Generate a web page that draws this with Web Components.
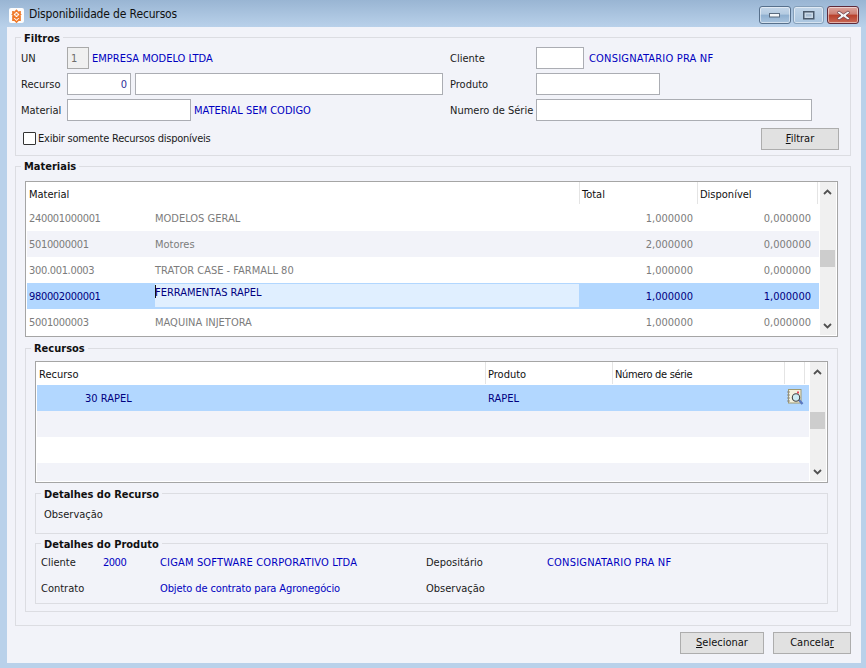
<!DOCTYPE html>
<html lang="pt">
<head>
<meta charset="utf-8">
<title>Disponibilidade de Recursos</title>
<style>
html, body { margin: 0; height: 100%; overflow: hidden; background: #b9d1ea; }
body { font: 11px "DejaVu Sans Condensed", "DejaVu Sans", sans-serif; color: #1a1a1a; }
</style>
</head>
<body>
<win-dialog caption="Disponibilidade de Recursos">
  <group-box shift caption="Filtros" style="--pad:5px;--pad-r:11px;--pad-t:3px;--pad-b:5px;--lx:0px">
    <form-row>
      <form-cell style="--cw:429px">
        <field-label style="--w:46px">UN</field-label>
        <text-field disabled style="--w:22px">1</text-field>
        <blue-text style="--ml:3px">EMPRESA MODELO LTDA</blue-text>
      </form-cell>
      <form-cell>
        <field-label style="--w:86px">Cliente</field-label>
        <text-field style="--w:48px"></text-field>
        <blue-text style="--ml:5px;letter-spacing:.2px">CONSIGNATARIO PRA NF</blue-text>
      </form-cell>
    </form-row>
    <form-row>
      <form-cell style="--cw:429px">
        <field-label style="--w:46px">Recurso</field-label>
        <text-field right style="--w:64px">0</text-field>
        <text-field style="--w:308px;--ml:4px"></text-field>
      </form-cell>
      <form-cell>
        <field-label style="--w:86px">Produto</field-label>
        <text-field style="--w:124px"></text-field>
      </form-cell>
    </form-row>
    <form-row>
      <form-cell style="--cw:429px">
        <field-label style="--w:46px">Material</field-label>
        <text-field style="--w:124px"></text-field>
        <blue-text style="--ml:3px">MATERIAL SEM CODIGO</blue-text>
      </form-cell>
      <form-cell>
        <field-label style="--w:86px">Numero de Série</field-label>
        <text-field style="--w:276px"></text-field>
      </form-cell>
    </form-row>
    <form-row style="--row-mt:7px">
      <form-cell style="--grow:1">
        <check-box style="--ml:2px;letter-spacing:-.23px">Exibir somente Recursos disponíveis</check-box>
      </form-cell>
      <win-button style="--w:78px"><u>F</u>iltrar</win-button>
    </form-row>
  </group-box>

  <group-box caption="Materiais" style="--pad:9px;--pad-r:12px;--pad-t:8px;--pad-b:13px;--lx:-4px;--mt:4px">
    <data-grid thumb="68" style="--cols:128px 425px 118px 120px 1px;--h:156px">
      <grid-row head><grid-cell span="2">Material</grid-cell><grid-cell>Total</grid-cell><grid-cell>Disponível</grid-cell></grid-row>
      <grid-row muted><grid-cell code>240001000001</grid-cell><grid-cell desc>MODELOS GERAL</grid-cell><grid-cell right style="--pr:5px">1,000000</grid-cell><grid-cell right>0,000000</grid-cell></grid-row>
      <grid-row muted alt><grid-cell code>5010000001</grid-cell><grid-cell desc>Motores</grid-cell><grid-cell right style="--pr:5px">2,000000</grid-cell><grid-cell right>0,000000</grid-cell></grid-row>
      <grid-row muted><grid-cell code>300.001.0003</grid-cell><grid-cell desc>TRATOR CASE - FARMALL 80</grid-cell><grid-cell right style="--pr:5px">1,000000</grid-cell><grid-cell right>0,000000</grid-cell></grid-row>
      <grid-row selected><grid-cell code>980002000001</grid-cell><grid-cell editing>FERRAMENTAS RAPEL</grid-cell><grid-cell right style="--pr:5px">1,000000</grid-cell><grid-cell right>1,000000</grid-cell></grid-row>
      <grid-row muted><grid-cell code>5001000003</grid-cell><grid-cell desc>MAQUINA INJETORA</grid-cell><grid-cell right style="--pr:5px">1,000000</grid-cell><grid-cell right>0,000000</grid-cell></grid-row>
    </data-grid>

    <group-box caption="Recursos" style="--pad:9px;--pad-r:9px;--pad-t:6px;--pad-b:7px;--lx:-4px;--mt:5px">
      <data-grid thumb="50" style="--cols:449px 127px 172px 20px 4px;--h:122px">
        <grid-row head><grid-cell>Recurso</grid-cell><grid-cell>Produto</grid-cell><grid-cell style="letter-spacing:-.33px">Número de série</grid-cell><grid-cell></grid-cell></grid-row>
        <grid-row selected><grid-cell style="--pl:48px">30 RAPEL</grid-cell><grid-cell>RAPEL</grid-cell><grid-cell></grid-cell><grid-cell><lookup-icon></lookup-icon></grid-cell></grid-row>
        <grid-row alt></grid-row>
        <grid-row></grid-row>
        <grid-row alt style="--rh:18px"></grid-row>
      </data-grid>

      <group-box shift caption="Detalhes do Recurso" style="--pad:8px;--pad-r:8px;--pad-t:3px;--pad-b:8px;--lx:-3px;--mt:4px">
        <form-row><form-cell><field-label>Observação</field-label></form-cell></form-row>
      </group-box>

      <group-box shift caption="Detalhes do Produto" style="--pad:5px;--pad-r:5px;--pad-t:1px;--pad-b:4px;--lx:0px;--mt:3px">
        <form-row>
          <form-cell>
            <field-label style="--w:62px">Cliente</field-label>
            <blue-text style="--w:57px;letter-spacing:-.5px">2000</blue-text>
            <blue-text style="--w:266px;letter-spacing:.16px">CIGAM SOFTWARE CORPORATIVO LTDA</blue-text>
            <field-label style="--w:121px">Depositário</field-label>
            <blue-text style="letter-spacing:.2px">CONSIGNATARIO PRA NF</blue-text>
          </form-cell>
        </form-row>
        <form-row>
          <form-cell>
            <field-label style="--w:119px">Contrato</field-label>
            <blue-text style="--w:266px;letter-spacing:-.11px">Objeto de contrato para Agronegócio</blue-text>
            <field-label>Observação</field-label>
          </form-cell>
        </form-row>
      </group-box>
    </group-box>
  </group-box>

  <dialog-actions slot="actions">
    <win-button style="--w:84px"><u>S</u>elecionar</win-button>
    <win-button style="--w:78px">Cancela<u>r</u></win-button>
  </dialog-actions>
</win-dialog>

<script>
// pequeno helper: cria a classe com shadow root aberto a partir de um html fixo
function simple(tag, html) {
    customElements.define(tag, class extends HTMLElement {
        constructor() {
            super();
            this.attachShadow({ mode: 'open' }).innerHTML = html;
        }
    });
}

class WinDialog extends HTMLElement {
    connectedCallback() {
        if (this.shadowRoot) return;
        this.attachShadow({ mode: 'open' }).innerHTML = `
            <style>
                :host { display: flex; flex-direction: column; height: 668px; background: #b9d1ea; }
                .bar { display: flex; align-items: flex-start; height: 27px; flex: none; padding: 0 7px 0 9px;
                       background: linear-gradient(#99b5d3, #b9d1ea); }
                .logo { margin: 8px 5px 0 0; }
                .cap { flex: 1; margin-top: 6px; line-height: 16px; font-size: 12px; letter-spacing: -.15px; color: #101010; }
                .ctl { width: 32px; height: 18px; box-sizing: border-box; margin: 6px 0 0 2px; border: 1px solid #57708c; border-radius: 3px;
                       box-shadow: inset 0 0 0 1px rgba(255,255,255,.5); display: flex; align-items: center; justify-content: center;
                       background: linear-gradient(#c4d6e9 0, #b4cbe1 45%, #8fb0d0 50%, #a9c4de 100%); }
                .ctl.max { width: 31px; border-color: #86a0ba; background: linear-gradient(#c2d5e8, #aac5df); margin-left: 2px; }
                .ctl.x { margin-left: 3px; border-color: #5e2a3a; background: linear-gradient(#dca69f 0, #cd7f74 45%, #b83f2b 50%, #c96855 100%); }
                .client { flex: 1; display: flex; flex-direction: column; margin: 0 5px 5px 7px; padding: 4px 10px 0 8px; background: #f2f3f9; }
            </style>
            <div class="bar">
                <svg class="logo" width="15" height="15" viewBox="0 0 15 15">
                    <rect width="15" height="15" rx="2" fill="#fdfdfd"/>
                    <path d="M7.5 2.5 11.5 6.5 7.5 10.5 3.5 6.5ZM4 10.5 7.5 14 11 10.5M4 3v10M11 3v10" fill="none" stroke="#f07a2a" stroke-width="1.7"/>
                    <rect x="6.5" y="5.5" width="2" height="2" fill="#f07a2a"/>
                </svg>
                <span class="cap">${this.getAttribute('caption')}</span>
                <div class="ctl"><svg width="12" height="5"><rect x=".5" y=".5" width="10" height="3.5" fill="#f4f7fa" stroke="#5a6b7f"/></svg></div>
                <div class="ctl max"><svg width="12" height="9"><rect x=".75" y=".75" width="10" height="7" fill="#c9d8e6" stroke="#4a5a6c" stroke-width="1.5"/><rect x="3" y="3" width="5.5" height="2.5" fill="#a9bfd5"/></svg></div>
                <div class="ctl x"><svg width="15" height="11"><path d="M3 1 7.5 4 12 1 14 2.6 10 5.5 14 8.4 12 10 7.5 7 3 10 1 8.4 5 5.5 1 2.6Z" fill="#f4f5f7" stroke="#6a3a44" stroke-width=".8"/></svg></div>
            </div>
            <div class="client"><slot></slot><slot name="actions"></slot></div>
        `;
    }
}
customElements.define('win-dialog', WinDialog);

class GroupBox extends HTMLElement {
    connectedCallback() {
        if (this.shadowRoot) return;
        this.attachShadow({ mode: 'open' }).innerHTML = `
            <style>
                :host { display: block; margin-top: var(--mt, 0); }
                fieldset { margin: 0; min-width: 0; border: 1px solid #dcdde2;
                           padding: var(--own-t) var(--own-r) var(--own-b) var(--own-l); }
                legend { margin-left: var(--own-lx); padding: 0 3px; font-weight: bold; height: 13px; line-height: 13px; color: #101010; }
                :host([shift]) legend { line-height: 15px; }
            </style>
            <fieldset><legend>${this.getAttribute('caption')}</legend><slot></slot></fieldset>
        `;
        // as variaveis herdam pra dentro dos group-box filhos, entao fixa o valor em cada um
        const cs = this.style;
        const set = (own, v) => this.shadowRoot.querySelector('fieldset').style.setProperty(own, cs.getPropertyValue(v));
        set('--own-t', '--pad-t'); set('--own-r', '--pad-r'); set('--own-b', '--pad-b'); set('--own-l', '--pad');
        this.shadowRoot.querySelector('legend').style.setProperty('--own-lx', cs.getPropertyValue('--lx'));
    }
}
customElements.define('group-box', GroupBox);

simple('form-row', `
    <style>:host { display: flex; align-items: center; height: 22px; }
    :host(:not(:first-child)) { margin-top: var(--row-mt, 4px); }</style><slot></slot>`);
simple('form-cell', `
    <style>:host { display: flex; align-items: center; flex: var(--grow, 0) 0 var(--cw, auto); }</style><slot></slot>`);
simple('field-label', `
    <style>:host { display: block; flex: none; width: var(--w, auto); white-space: nowrap; }</style><slot></slot>`);
simple('blue-text', `
    <style>:host { display: block; flex: none; width: var(--w, auto); margin-left: var(--ml, 0); color: #0000c0; white-space: nowrap; }</style><slot></slot>`);

class TextField extends HTMLElement {
    constructor() {
        super();
        this.attachShadow({ mode: 'open' }).innerHTML = `
            <style>
                :host { display: block; flex: none; box-sizing: border-box; width: var(--w); height: 22px; margin-left: var(--ml, 0);
                        padding: 0 3px 0 4px; background: #fff; border: 1px solid #abadb3; line-height: 21px; color: #303030; }
                :host([disabled]) { background: #f0f0f0; color: #6d6d6d; padding-left: 3px; border-color: #a9a9a9; }
                :host([right]) { text-align: right; color: #30309a; }
            </style><slot></slot>`;
    }
}
customElements.define('text-field', TextField);

simple('check-box', `
    <style>
        :host { display: flex; align-items: center; margin-left: var(--ml, 0); padding-bottom: 2px; }
        i { width: 11px; height: 11px; margin-right: 2px; background: #fff; border: 1px solid #333; border-radius: 1px; }
    </style><i></i><slot></slot>`);

simple('win-button', `
    <style>
        :host { display: block; box-sizing: border-box; flex: none; width: var(--w); height: 22px; background: #e1e1e1;
                border: 1px solid #adadad; text-align: center; line-height: 20px; color: #101010; }
    </style><slot></slot>`);

simple('dialog-actions', `
    <style>:host { display: flex; justify-content: flex-end; gap: 9px; margin-top: 6px; }</style><slot></slot>`);

class DataGrid extends HTMLElement {
    connectedCallback() {
        if (this.shadowRoot) return;
        const thumb = this.getAttribute('thumb');
        this.attachShadow({ mode: 'open' }).innerHTML = `
            <style>
                :host { display: flex; box-sizing: border-box; height: var(--h); background: #fff; border: 1px solid #a5a5a5; padding: 1px; }
                .rows { flex: 1; min-width: 0; overflow: hidden; margin-top: -1px; }
                .bar { flex: none; width: 16px; margin: -1px 0 0 1px; position: relative; background: #f0f0f0; }
                .bar svg { position: absolute; left: 3px; }
                .thumb { position: absolute; left: 0; right: 1px; top: ${thumb}px; height: 17px; background: #cdcdcd; }
            </style>
            <div class="rows"><slot></slot></div>
            <div class="bar">
                <svg style="top:7px" width="9" height="6"><path d="M1 5 4.5 1.5 8 5" fill="none" stroke="#505050" stroke-width="1.8"/></svg>
                <div class="thumb"></div>
                <svg style="bottom:6px" width="9" height="6"><path d="M1 1 4.5 4.5 8 1" fill="none" stroke="#505050" stroke-width="1.8"/></svg>
            </div>`;
    }
}
customElements.define('data-grid', DataGrid);

simple('grid-row', `
    <style>
        :host { display: grid; grid-template-columns: var(--cols); height: var(--rh, 26px); line-height: 28px; white-space: nowrap; color: #7c7c7c; background: #fff; }
        :host([head]) { height: 23px; line-height: 25px; color: #101010; }
        :host([alt]) { background: #f2f3f9; }
        :host([selected]) { background: #b2d7ff; color: #000080; }
    </style><slot></slot>`);

class GridCell extends HTMLElement {
    constructor() {
        super();
        this.attachShadow({ mode: 'open' }).innerHTML = `
            <style>
                :host { display: block; min-width: 0; padding: 0 0 0 var(--pl, 2px); }
                :host([span="2"]) { grid-column: span 2; }
                :host([code]) { letter-spacing: -.33px; }
                :host([desc]) { padding-left: 0; }
                :host([right]) { text-align: right; padding: 0 var(--pr, 7px) 0 0; }
                :host-context(grid-row[head]) { border-right: 1px solid #e4e4e4; margin-bottom: 1px; height: 22px; }
                :host([editing]) { margin: 1px 1px 2px 0; padding: 0; height: 23px; line-height: 17px; background: #e0efff; }
                i { position: absolute; width: 1px; height: 13px; margin-top: 1px; background: #111; }
            </style><slot></slot>`;
        if (this.hasAttribute('editing')) this.shadowRoot.prepend(document.createElement('i'));
    }
}
customElements.define('grid-cell', GridCell);

// icone da lupa sobre o caderno, coluna de pesquisa do grid
simple('lookup-icon', `
    <style>:host { display: block; height: 26px; } svg { display: block; margin-top: 4px; }</style>
    <svg width="17" height="17" viewBox="0 0 17 17">
        <rect x="1.5" y=".5" width="12.5" height="13.5" fill="#f4f1df" stroke="#a09a70"/>
        <path d="M0 3h3M0 6h3M0 9h3M0 12h3" stroke="#8a8a8a"/>
        <rect x="10" y="2.5" width="2" height="2" fill="#e8475a"/>
        <path d="m12 11 3.5 4" stroke="#5a78c0" stroke-width="2.4"/>
        <circle cx="9" cy="8.5" r="3.7" fill="#cdebf3" stroke="#444" stroke-width="1.1"/>
    </svg>`);
</script>
</body>
</html>
